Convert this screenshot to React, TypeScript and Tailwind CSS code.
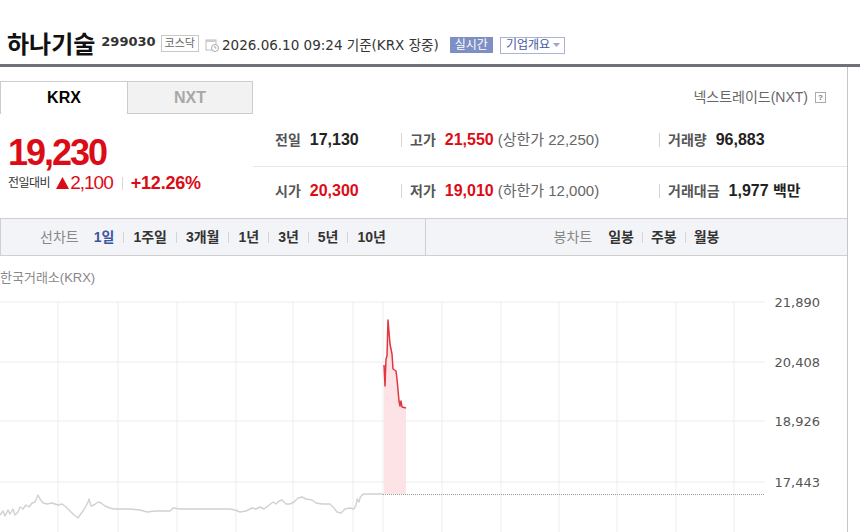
import React from 'react';

const sans = 'font-["Liberation_Sans","Noto_Sans_CJK_KR",sans-serif]';
const deja = 'font-["DejaVu_Sans","Noto_Sans_CJK_KR",sans-serif]';

const redPts: [number, number][] = [
  [384, 64], [385, 85], [386, 58], [387, 55], [388, 19], [390, 43], [392, 53], [393, 68],
  [396, 70], [397, 78], [399, 100], [400, 105], [401, 100], [402, 106], [406, 107],
];

const grayPts: [number, number][] = [
  [0, 214], [3, 210], [5, 215], [8, 209], [10, 213], [13, 208], [15, 214], [18, 211],
  [20, 206], [23, 208], [26, 204], [29, 206], [32, 202], [35, 201], [38, 194],
  [40, 198], [43, 202], [47, 203], [52, 202], [58, 204], [62, 203], [66, 206], [70, 210], [74, 214],
  [78, 217], [80, 214], [83, 210], [86, 205], [88, 201], [89, 198], [91, 205], [94, 204], [98, 201],
  [101, 202], [105, 205], [110, 207], [114, 208], [120, 208], [130, 208], [140, 209], [147, 211],
  [155, 210], [165, 210], [170, 210], [173, 207], [180, 208], [200, 208], [215, 208], [230, 208],
  [235, 209], [240, 211], [246, 210], [252, 207], [256, 208], [260, 206], [264, 208], [268, 205],
  [273, 201], [276, 203], [279, 200], [282, 199], [286, 203], [290, 203], [294, 201], [298, 197],
  [302, 196], [306, 198], [312, 199], [316, 202], [322, 203], [330, 203], [334, 207], [337, 211],
  [341, 212], [345, 208], [350, 207], [354, 208], [356, 204], [357, 198], [359, 201], [360, 197],
  [362, 194], [364, 193], [383, 193],
];

const toPath = (pts: [number, number][]) => pts.map(([x, y], i) => `${i ? 'L' : 'M'}${x} ${y}`).join(' ');

const vLines = [58, 118, 177, 236, 293, 353, 383, 442, 501, 559, 617, 676, 734];
const hLines = [
  { y: 1, label: '21,890' },
  { y: 61, label: '20,408' },
  { y: 120, label: '18,926' },
  { y: 181, label: '17,443' },
];

function Sep({ h = 'h-[14px]', c = 'bg-[#d6d6d6]' }: { h?: string; c?: string }) {
  return <span className={`inline-block w-px ${h} ${c}`} />;
}

function Stat({ label, value, red, extra }: { label: string; value: string; red?: boolean; extra?: React.ReactNode }) {
  return (
    <div className="flex items-center gap-[9px]">
      <span className="text-[14px] font-bold text-[#555]">{label}</span>
      <span className={`text-[16px] font-bold ${red ? 'text-[#dc0c16]' : 'text-[#222]'}`}>{value}</span>
      {extra}
    </div>
  );
}

function Chart() {
  const fill = toPath(redPts) + ' L406 193 L384 193 Z';
  return (
    <svg width="848" height="240" className="block overflow-visible">
      {hLines.map((l) => (
        <line key={l.y} x1="0" x2="765" y1={l.y} y2={l.y} stroke="#ededed" strokeWidth="1" />
      ))}
      {vLines.map((x) => (
        <line key={x} x1={x} x2={x} y1="0" y2="240" stroke="#ededed" strokeWidth="1" />
      ))}
      <line x1="383" x2="765" y1="193.5" y2="193.5" stroke="#9a9a9a" strokeWidth="1" strokeDasharray="1 1" />
      <path d={fill} fill="#fde3e6" />
      <path d={toPath(grayPts)} fill="none" stroke="#d0d1d6" strokeWidth="1.4" strokeLinejoin="round" />
      <path d={toPath(redPts)} fill="none" stroke="#e2363f" strokeWidth="1.5" strokeLinejoin="round" />
      {hLines.map((l) => (
        <text
          key={l.label}
          x="820"
          y={l.y + 5}
          textAnchor="end"
          fontSize="13"
          fill="#555"
          fontFamily="DejaVu Sans, sans-serif"
        >
          {l.label}
        </text>
      ))}
    </svg>
  );
}

export default function App() {
  return (
    <div className={`w-[860px] h-[532px] overflow-hidden bg-white ${sans}`}>
      {/* Header */}
      <div className="h-[64px] pt-[26px] pl-[7px] flex items-center">
        <span className="text-[24px] font-bold text-[#111] leading-none">하나기술</span>
        <span className={`ml-[6px] mb-[7px] text-[13px] font-bold text-[#333] ${deja}`}>299030</span>
        <span className="ml-[5px] mb-[3px] h-[17px] px-[3px] flex items-center border border-[#c9c9c9] text-[11px] text-[#666]">
          코스닥
        </span>
        <svg width="14" height="14" viewBox="0 0 14 14" className="ml-[6px]">
          <rect x="1" y="2" width="10" height="10" fill="none" stroke="#bbb" />
          <rect x="1" y="2" width="10" height="2" fill="#ccc" />
          <circle cx="10" cy="10" r="3.5" fill="#fff" stroke="#aaa" />
          <path d="M10 8v2h1.5" stroke="#aaa" fill="none" />
        </svg>
        <span className={`ml-[3px] text-[13.5px] text-[#333] ${deja}`}>2026.06.10 09:24 기준(KRX 장중)</span>
        <span className="ml-[11px] h-[16px] px-[5px] flex items-center bg-[#7d8fc5] text-white text-[12px]">실시간</span>
        <span className="ml-[7px] h-[17px] pl-[5px] pr-[4px] flex items-center border border-[#a9b3d3] text-[12px] text-[#4358a4]">
          기업개요
          <svg width="7" height="4" viewBox="0 0 7 4" className="ml-[3px]">
            <path d="M0 0h7L3.5 4z" fill="#9aa6cc" />
          </svg>
        </span>
      </div>
      <div className="h-[3px] bg-[#6f7178]" />

      {/* Main */}
      <div className="w-[848px] border-r border-[#c6c6c6] pt-[14px]">
        {/* Tabs */}
        <div className="h-[33px] flex items-stretch">
          <div className="w-[127px] border-t border-l border-[#ccc] flex items-center justify-center text-[16px] font-bold text-black">
            KRX
          </div>
          <div className="w-[126px] border border-[#ccc] bg-[#f2f2f2] flex items-center justify-center text-[16px] font-bold text-[#a8a8a8]">
            NXT
          </div>
          <div className="flex-1 flex items-center justify-end pr-[21px] text-[14px] text-[#666]">
            넥스트레이드(NXT)
            <span className="ml-[7px] w-[11px] h-[11px] border border-[#aaa] flex items-center justify-center text-[8px] font-bold text-[#777] leading-none">
              ?
            </span>
          </div>
        </div>

        {/* Price + stats */}
        <div className="flex">
          <div className="w-[253px] pl-[8px] pt-[21px]">
            <div className="text-[36px] leading-none font-bold tracking-[-2px] text-[#dc0c16]">19,230</div>
            <div className="mt-[2px] h-[20px] flex items-center">
              <span className="text-[12px] text-[#333] tracking-[-0.5px]">전일대비</span>
              <svg width="13" height="12" viewBox="0 0 13 12" className="ml-[6px] mr-[1px]">
                <path d="M6.5 0L13 12H0z" fill="#dc0c16" />
              </svg>
              <span className="text-[19px] tracking-[-1px] text-[#dc0c16]">2,100</span>
              <span className="ml-[9px] mr-[8px] flex">
                <Sep h="h-[13px]" c="bg-[#d9d9d9]" />
              </span>
              <span className="text-[18px] font-bold tracking-[-0.2px] text-[#dc0c16]">+12.26%</span>
            </div>
          </div>
          <div className="flex-1 flex flex-col">
            <div className="h-[53px] border-b border-[#e6e6e6] flex items-center">
              <div className="w-[148px] pl-[22px]">
                <Stat label="전일" value="17,130" />
              </div>
              <div className="w-[258px] flex items-center">
                <Sep />
                <div className="pl-[8px]">
                  <Stat
                    label="고가"
                    value="21,550"
                    red
                    extra={<span className="-ml-[5px] text-[15px] text-[#666]">(상한가 22,250)</span>}
                  />
                </div>
              </div>
              <div className="flex-1 flex items-center">
                <Sep />
                <div className="pl-[8px]">
                  <Stat label="거래량" value="96,883" />
                </div>
              </div>
            </div>
            <div className="h-[48px] flex items-center">
              <div className="w-[148px] pl-[22px]">
                <Stat label="시가" value="20,300" red />
              </div>
              <div className="w-[258px] flex items-center">
                <Sep />
                <div className="pl-[8px]">
                  <Stat
                    label="저가"
                    value="19,010"
                    red
                    extra={<span className="-ml-[5px] text-[15px] text-[#666]">(하한가 12,000)</span>}
                  />
                </div>
              </div>
              <div className="flex-1 flex items-center">
                <Sep />
                <div className="pl-[8px] flex items-center gap-[9px]">
                  <span className="text-[14px] font-bold text-[#555]">거래대금</span>
                  <span className="text-[16px] font-bold text-[#222]">
                    1,977 <span className="text-[15px]">백만</span>
                  </span>
                </div>
              </div>
            </div>
          </div>
        </div>

        {/* Chart toolbar */}
        <div className="mt-[3px] h-[38px] flex border-y border-l border-[#cfcfcf] bg-[#f3f4f7] text-[14px] font-bold">
          <div className="w-[425px] border-r border-[#cfcfcf] flex items-center justify-center">
            <span className="font-normal text-[#888] mr-[15px]">선차트</span>
            <span className="text-[#3c55a5]">1일</span>
            {['1주일', '3개월', '1년', '3년', '5년', '10년'].map((t) => (
              <React.Fragment key={t}>
                <span className="mx-[9px] inline-block w-px h-[11px] bg-[#d4d4d4]" />
                <span className="text-[#333]">{t}</span>
              </React.Fragment>
            ))}
          </div>
          <div className="flex-1 flex items-center justify-center">
            <span className="font-normal text-[#888] mr-[16px]">봉차트</span>
            <span className="text-[#333]">일봉</span>
            <span className="mx-[8px] inline-block w-px h-[11px] bg-[#d4d4d4]" />
            <span className="text-[#333]">주봉</span>
            <span className="mx-[8px] inline-block w-px h-[11px] bg-[#d4d4d4]" />
            <span className="text-[#333]">월봉</span>
          </div>
        </div>

        <div className="h-[45px] pt-[14px] text-[13px] leading-[16px] text-[#888]">한국거래소(KRX)</div>

        <Chart />
      </div>
    </div>
  );
}
